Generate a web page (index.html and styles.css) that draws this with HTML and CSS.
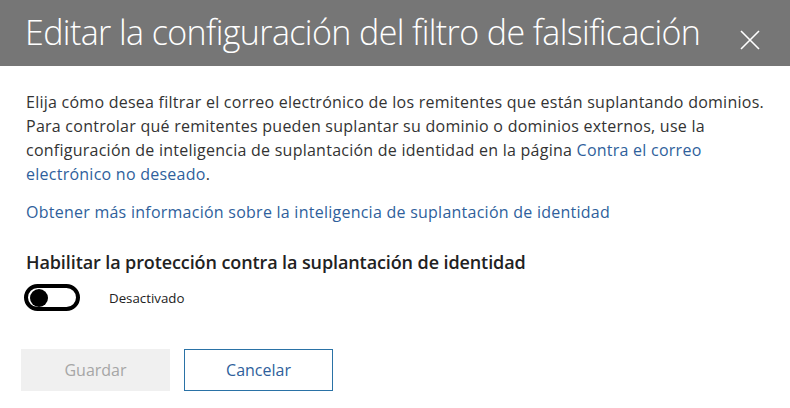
FILE: index.html
```html
<!DOCTYPE html>
<html lang="es">
<head>
<meta charset="utf-8">
<link rel="stylesheet" href="styles.css">
</head>
<body>
<div class="panel">
  <header class="header">
    <h1 class="title">Editar la configuración del filtro de falsificación</h1>
    <button class="close" aria-label="Cerrar">
      <svg width="20" height="20" viewBox="0 0 20 20"><path d="M1 1 L19 19 M19 1 L1 19" stroke="#fff" stroke-width="1.6" fill="none"/></svg>
    </button>
  </header>
  <main class="content">
    <p class="desc">Elija cómo desea filtrar el correo electrónico de los remitentes que están suplantando dominios. Para controlar qué remitentes pueden suplantar su dominio o dominios externos, use la configuración de inteligencia de suplantación de identidad en la página <a class="link" href="#">Contra el correo electrónico no deseado</a>.</p>
    <p class="more"><a class="link" href="#">Obtener más información sobre la inteligencia de suplantación de identidad</a></p>
    <h2 class="label">Habilitar la protección contra la suplantación de identidad</h2>
    <div class="toggle-row">
      <span class="toggle"><span class="knob"></span></span>
      <span class="state">Desactivado</span>
    </div>
    <div class="actions">
      <button class="btn btn-disabled">Guardar</button>
      <button class="btn btn-outline">Cancelar</button>
    </div>
  </main>
</div>
</body>
</html>
```
FILE: styles.css
```css
* { box-sizing: border-box; }
html, body { margin: 0; padding: 0; background: #fff; }
body { font-family: "Open Sans", "Noto Sans", "Liberation Sans", sans-serif; color: #333; width: 790px; height: 408px; overflow: hidden; }
.header {
  background: #767676;
  height: 66px;
  display: flex;
  align-items: center;
  justify-content: space-between;
  padding: 0 30px 0 25px;
}
.title {
  margin: 0;
  font-weight: 300;
  font-size: 34px;
  color: #fff;
  letter-spacing: -0.6px;
  line-height: 1;
  padding-bottom: 2px;
}
.close {
  background: none; border: 0; padding: 0; margin-top: 14px;
  width: 20px; height: 20px; display: flex;
}
.content { padding: 24px 26px 0 26px; }
.desc {
  margin: 0;
  font-size: 16px;
  line-height: 24px;
  letter-spacing: 0.25px;
  width: 740px;
}
.link { color: #2f5f9c; text-decoration: none; }
.more {
  margin: 14px 0 0 0;
  font-size: 16px;
  line-height: 24px;
  letter-spacing: 0.25px;
}
.label {
  margin: 26px 0 0 0;
  font-size: 18px;
  font-weight: 600;
  line-height: 24px;
  color: #222;
  letter-spacing: -0.1px;
}
.toggle-row { display: flex; align-items: center; margin-top: 10px; margin-left: -2px; }
.toggle {
  width: 56px; height: 27px;
  border: 4px solid #000;
  border-radius: 14px;
  display: flex; align-items: center;
  padding-left: 2px;
}
.knob { width: 18px; height: 18px; border-radius: 50%; background: #000; }
.state { margin-left: 29px; font-size: 13.3px; color: #222; }
.actions { display: flex; gap: 14px; margin-top: 38px; margin-left: -5px; }
.btn {
  width: 149px; height: 42px;
  font-family: inherit; font-size: 16px;
  display: flex; align-items: center; justify-content: center;
}
.btn-disabled { background: #f0f0f0; border: 0; color: #a6a6a6; }
.btn-outline { background: #fff; border: 1px solid #2a72a6; color: #2f5f9c; }
```
